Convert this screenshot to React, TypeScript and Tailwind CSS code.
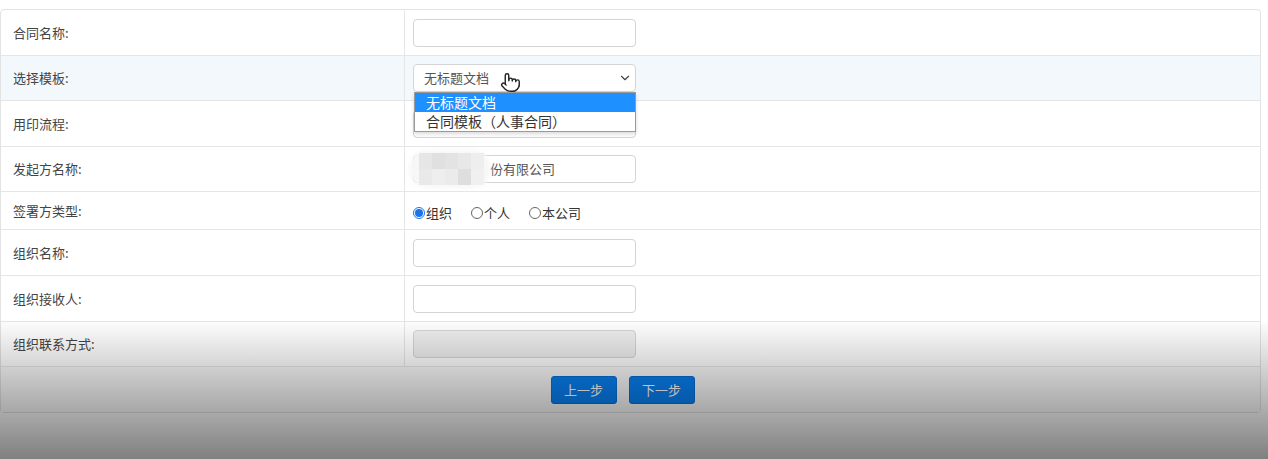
import { ChevronDown, Pointer } from 'lucide-react';

const font = { fontFamily: '"Noto Sans CJK SC", "Noto Sans", sans-serif' };

function Row({
  label,
  h,
  hover,
  children,
}: {
  label: string;
  h: string;
  hover?: boolean;
  children?: React.ReactNode;
}) {
  return (
    <div className={`grid grid-cols-[404px_1fr] border-b border-[#e6e6e6] ${hover ? 'bg-[#f3f8fd]' : ''}`}>
      <div className={`flex items-center px-3 border-r border-[#e6e6e6] text-[13px] text-[#444] ${h}`}>
        {label}
      </div>
      <div className={`flex items-center pl-2 ${h}`}>{children}</div>
    </div>
  );
}

function Box({ disabled, children }: { disabled?: boolean; children?: React.ReactNode }) {
  return (
    <div
      className={`relative flex items-center w-[223px] h-[28px] rounded-[4px] border border-[#d4d4d4] px-2.5 text-[13px] text-[#555] ${
        disabled ? 'bg-[#eeeeee]' : 'bg-white'
      }`}
    >
      {children}
    </div>
  );
}

function Radio({ checked, label }: { checked?: boolean; label: string }) {
  return (
    <span className="flex items-center text-[13px] text-[#333]">
      <span
        className={`flex items-center justify-center w-[12px] h-[12px] rounded-full border ${
          checked ? 'border-[#1a73e8]' : 'border-[#666]'
        }`}
      >
        {checked && <span className="w-[8px] h-[8px] rounded-full bg-[#1a73e8]" />}
      </span>
      <span className="ml-[1px]">{label}</span>
    </span>
  );
}

export default function App() {
  return (
    <div className="relative w-full h-[459px] bg-white pt-[9px] overflow-hidden" style={font}>
      <div className="w-[1261px] border border-[#e3e3e3] rounded-[4px] overflow-visible">
        <Row label="合同名称:" h="h-[45px]">
          <Box />
        </Row>

        <Row label="选择模板:" h="h-[44px]" hover>
          <div className="relative">
            <Box>
              <span>无标题文档</span>
              <ChevronDown size={14} strokeWidth={2} className="absolute right-[3px] text-[#444]" />
            </Box>
            {/* open option list */}
            <div className="absolute left-[1px] top-[28px] z-10 w-[222px] border border-[#9a9a9a] bg-white text-[14px] leading-[19px] shadow-[0_2px_4px_rgba(0,0,0,0.15)]">
              <div className="bg-[#1e90ff] text-white pl-[11px]">无标题文档</div>
              <div className="text-[#333] pl-[11px]">合同模板（人事合同）</div>
            </div>
            {/* mouse pointer */}
            <Pointer
              size={21}
              strokeWidth={1.6}
              className="absolute left-[87px] top-[8px] z-20 text-[#222] fill-white"
            />
          </div>
        </Row>

        <Row label="用印流程:" h="h-[45px]">
          <Box />
        </Row>

        <Row label="发起方名称:" h="h-[44px]">
          <div className="relative">
            <Box>
              <span className="pl-[66px]">份有限公司</span>
            </Box>
            {/* blurred mosaic */}
            <div className="absolute -left-[4px] -top-[5px] w-[82px] h-[38px] rounded-full bg-[#f7f7f7] blur-[2px]" />
            <div className="absolute left-[6px] top-[-2px] grid grid-cols-[13px_13px_13px_13px_13px] grid-rows-[16px_16px]">
              <div className="bg-[#e6e6e6]" />
              <div className="bg-[#e0e0e0]" />
              <div className="bg-[#e3e3e3]" />
              <div className="bg-[#e8e8e8]" />
              <div className="bg-[#eeeeee]" />
              <div className="bg-[#e9e9e9]" />
              <div className="bg-[#eeeeee]" />
              <div className="bg-[#ebebeb]" />
              <div className="bg-[#dedede]" />
              <div className="bg-[#f0f0f0]" />
            </div>
          </div>
        </Row>

        <Row label="签署方类型:" h="h-[37px]">
          <div className="flex items-center gap-[19px] pt-[5px]">
            <Radio checked label="组织" />
            <Radio label="个人" />
            <Radio label="本公司" />
          </div>
        </Row>

        <Row label="组织名称:" h="h-[45px]">
          <Box />
        </Row>

        <Row label="组织接收人:" h="h-[45px]">
          <Box />
        </Row>

        <Row label="组织联系方式:" h="h-[44px]">
          <Box disabled />
        </Row>

        <div className="flex items-center justify-center gap-3 h-[45px] pr-4 bg-[#fafafa]">
          <button className="w-[66px] h-[28px] rounded-[3px] bg-[#0880f2] border border-[#0670d6] text-white text-[13px]">
            上一步
          </button>
          <button className="w-[66px] h-[28px] rounded-[3px] bg-[#0880f2] border border-[#0670d6] text-white text-[13px]">
            下一步
          </button>
        </div>
      </div>

      {/* dark fade over the bottom of the frame */}
      <div className="pointer-events-none absolute left-0 right-0 bottom-0 h-[140px] z-30 bg-linear-to-b from-transparent to-black/50" />
    </div>
  );
}
